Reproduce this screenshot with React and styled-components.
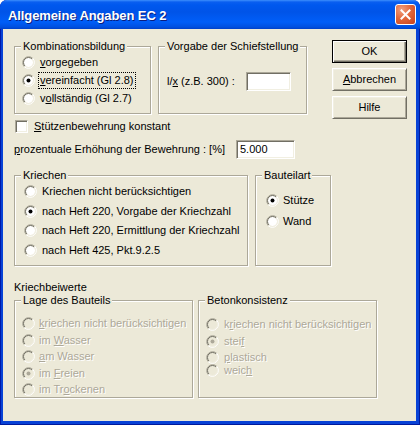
import React from "react";
import styled, { createGlobalStyle } from "styled-components";

const GlobalStyle = createGlobalStyle`
  html, body {
    margin: 0;
    padding: 0;
    background: #ffffff;
  }
  body {
    font-family: "Liberation Sans", Arial, sans-serif;
    font-size: 11px;
    color: #000;
  }
`;

const Window = styled.div`
  width: 420px;
  height: 425px;
  display: flex;
  flex-direction: column;
  background: #0842d6;
  border-radius: 7px 7px 0 0;
  overflow: hidden;
  box-shadow: inset 1px 0 0 #0019a8, inset -1px -1px 0 #001a9c;
`;

const TitleBar = styled.div`
  height: 29px;
  flex: none;
  display: flex;
  align-items: center;
  padding: 0 4px 0 8px;
  box-sizing: border-box;
  background: linear-gradient(
    to bottom,
    #3d8ffc 0px,
    #0a5ff0 2px,
    #0058ee 5px,
    #0054e8 12px,
    #005ef8 22px,
    #0050e0 27px,
    #0040c8 29px
  );
`;

const Title = styled.span`
  flex: 1;
  color: #fff;
  font-family: "Liberation Sans", Arial, sans-serif;
  font-weight: bold;
  font-size: 13px;
  letter-spacing: -0.1px;
  text-shadow: 1px 1px 0 #0a1e80;
  padding-top: 1px;
`;

const CloseButton = styled.div`
  width: 21px;
  height: 21px;
  box-sizing: border-box;
  border: 1px solid #fff;
  border-radius: 3px;
  background: radial-gradient(circle at 30% 25%, #f0a080 0%, #e2683c 45%, #c9401a 100%);
  display: flex;
  align-items: center;
  justify-content: center;
`;

const Client = styled.div`
  flex: 1;
  margin: 0 4px 4px 3px;
  background: #ece9d8;
  padding: 11px 9px 0 11px;
  display: flex;
  flex-direction: column;
`;

const TopRow = styled.div`
  display: flex;
  align-items: flex-start;
  height: 78px;
`;

const GroupRow = styled.div`
  display: flex;
  gap: ${(p) => p.$gap}px;
  margin-top: ${(p) => p.$mt || 0}px;
`;

const Group = styled.fieldset`
  box-sizing: border-box;
  margin: 0;
  padding: 0;
  min-width: 0;
  width: ${(p) => p.$w}px;
  height: ${(p) => p.$h}px;
  border: 1px solid #aca899;
  box-shadow: inset 1px 1px 0 #fff, 1px 1px 0 #fff;
`;

const Legend = styled.legend`
  margin-left: 6px;
  padding: 0 2px 0 2px;
  line-height: 13px;
  height: 13px;
  background: #ece9d8;
  color: #000;
`;

const GroupBody = styled.div`
  padding: ${(p) => p.$pt || 0}px 0 0 ${(p) => p.$pl}px;
`;

const RadioRow = styled.div`
  display: flex;
  align-items: center;
  height: ${(p) => p.$h}px;
  gap: ${(p) => p.$gap}px;
`;

const RadioSvg = styled.svg`
  flex: none;
  display: block;
`;

const Text = styled.span`
  display: inline-block;
  line-height: 13px;
  white-space: nowrap;
  color: ${(p) => (p.$disabled ? "#aca899" : "#000")};
  text-shadow: ${(p) => (p.$disabled ? "1px 1px 0 #fff" : "none")};
  outline: ${(p) => (p.$focus ? "1px dotted #000" : "none")};
  outline-offset: 1px;

  u {
    text-decoration-thickness: 1px;
    text-underline-offset: 1px;
  }
`;

const FieldRow = styled.div`
  display: flex;
  align-items: center;
  margin-top: ${(p) => p.$mt}px;
  height: ${(p) => p.$h}px;
`;

const FieldLabel = styled.span`
  width: ${(p) => p.$w}px;
  flex: none;
  white-space: nowrap;
  line-height: 13px;
`;

const TextBox = styled.div`
  box-sizing: border-box;
  width: ${(p) => p.$w}px;
  height: 19px;
  background: #fff;
  border-style: solid;
  border-width: 1px;
  border-color: #aca899 #fff #fff #aca899;
  box-shadow: inset 1px 1px 0 #716f64, inset -1px -1px 0 #f1efe2;
  padding: 2px 0 0 3px;
  line-height: 13px;
  font-size: 11px;
`;

const CheckRow = styled.div`
  display: flex;
  align-items: center;
  gap: 6px;
  margin-top: 2px;
  margin-left: 1px;
  height: 13px;
`;

const CheckBox = styled.div`
  box-sizing: border-box;
  width: 13px;
  height: 13px;
  flex: none;
  background: #fff;
  border-style: solid;
  border-width: 1px;
  border-color: #aca899 #fff #fff #aca899;
  box-shadow: inset 1px 1px 0 #716f64, inset -1px -1px 0 #f1efe2;
`;

const ButtonCol = styled.div`
  display: flex;
  flex-direction: column;
  gap: 5px;
  margin-left: 25px;
`;

const Button = styled.div`
  box-sizing: border-box;
  width: 75px;
  height: 23px;
  display: flex;
  align-items: center;
  justify-content: center;
  background: #ece9d8;
  border-style: solid;
  border-width: 1px;
  border-color: ${(p) =>
    p.$default ? "#000" : "#fff #716f64 #716f64 #fff"};
  box-shadow: ${(p) =>
    p.$default
      ? "inset 1px 1px 0 #fff, inset -1px -1px 0 #716f64, inset -2px -2px 0 #aca899"
      : "inset 1px 1px 0 #f1efe2, inset -1px -1px 0 #aca899"};
  line-height: 13px;
`;

const Caption = styled.div`
  margin-top: 15px;
  line-height: 13px;
  height: 13px;
`;

const Radio = ({ checked, disabled }) => (
  <RadioSvg width="13" height="13" viewBox="0 0 13 13">
    <circle cx="6.5" cy="6.5" r="4.6" fill={disabled ? "#ece9d8" : "#fff"} />
    <path d="M2.26 10.74A6 6 0 0 1 10.74 2.26" stroke="#aca899" fill="none" />
    <path d="M10.74 2.26A6 6 0 0 1 2.26 10.74" stroke="#ffffff" fill="none" />
    <path d="M2.96 10.04A5 5 0 0 1 10.04 2.96" stroke="#716f64" fill="none" />
    <path d="M10.04 2.96A5 5 0 0 1 2.96 10.04" stroke="#f1efe2" fill="none" />
    {checked && (
      <circle cx="6.5" cy="6.5" r="2" fill={disabled ? "#aca899" : "#000"} />
    )}
  </RadioSvg>
);

const RadioOption = ({ h, gap, checked, disabled, focus, children }) => (
  <RadioRow $h={h} $gap={gap}>
    <Radio checked={checked} disabled={disabled} />
    <Text $disabled={disabled} $focus={focus}>
      {children}
    </Text>
  </RadioRow>
);

const lageRows = [
  [<><u>k</u>riechen nicht berücksichtigen</>, false],
  [<>im <u>W</u>asser</>, false],
  [<><u>a</u>m Wasser</>, false],
  [<>im <u>F</u>reien</>, true],
  [<>im Tr<u>o</u>ckenen</>, false],
];

const betonRows = [
  [<>k<u>r</u>iechen nicht berücksichtigen</>, false, 18],
  [<>stei<u>f</u></>, true, 17],
  [<><u>p</u>lastisch</>, false, 14],
  [<>weic<u>h</u></>, false, 13],
];

const kriechRows = [
  ["Kriechen nicht berücksichtigen", false],
  ["nach Heft 220, Vorgabe der Kriechzahl", true],
  ["nach Heft 220, Ermittlung der Kriechzahl", false],
  ["nach Heft 425, Pkt.9.2.5", false],
];

export default function App() {
  return (
    <>
      <GlobalStyle />
      <Window>
        <TitleBar>
          <Title>Allgemeine Angaben EC 2</Title>
          <CloseButton>
            <svg width="11" height="11" viewBox="0 0 11 11">
              <path d="M1.5 1.5L9.5 9.5M9.5 1.5L1.5 9.5" stroke="#fff" strokeWidth="2" strokeLinecap="square" />
            </svg>
          </CloseButton>
        </TitleBar>
        <Client>
          <TopRow>
            <GroupRow $gap={7}>
              <Group $w={137} $h={74}>
                <Legend>Kombinationsbildung</Legend>
                <GroupBody $pl={7}>
                  <RadioOption h={18} gap={5}>
                    <u>v</u>orgegeben
                  </RadioOption>
                  <RadioOption h={18} gap={5} checked focus>
                    <u>v</u>ereinfacht (Gl 2.8)
                  </RadioOption>
                  <RadioOption h={18} gap={5}>
                    v<u>o</u>llständig (Gl 2.7)
                  </RadioOption>
                </GroupBody>
              </Group>
              <Group $w={149} $h={74}>
                <Legend>Vorgabe der Schiefstellung</Legend>
                <GroupBody $pl={8}>
                  <FieldRow $mt={18} $h={20}>
                    <FieldLabel $w={79}>
                      l/<u>x</u> (z.B. 300) :
                    </FieldLabel>
                    <TextBox $w={45} />
                  </FieldRow>
                </GroupBody>
              </Group>
            </GroupRow>
            <ButtonCol>
              <Button $default>OK</Button>
              <Button>
                <span>
                  <u>A</u>bbrechen
                </span>
              </Button>
              <Button>Hilfe</Button>
            </ButtonCol>
          </TopRow>

          <CheckRow>
            <CheckBox />
            <Text>
              <u>S</u>tützenbewehrung konstant
            </Text>
          </CheckRow>

          <FieldRow $mt={7} $h={19}>
            <FieldLabel $w={222}>
              <u>p</u>rozentuale Erhöhung der Bewehrung : [%]
            </FieldLabel>
            <TextBox $w={59}>5.000</TextBox>
          </FieldRow>

          <GroupRow $gap={7} $mt={10}>
            <Group $w={234} $h={97}>
              <Legend>Kriechen</Legend>
              <GroupBody $pl={9}>
                {kriechRows.map(([label, checked]) => (
                  <RadioOption key={label} h={19.5} gap={5} checked={checked}>
                    {label}
                  </RadioOption>
                ))}
              </GroupBody>
            </Group>
            <Group $w={76} $h={97}>
              <Legend>Bauteilart</Legend>
              <GroupBody $pl={10} $pt={8}>
                <RadioOption h={21} gap={4} checked>
                  Stütze
                </RadioOption>
                <RadioOption h={21} gap={4}>
                  Wand
                </RadioOption>
              </GroupBody>
            </Group>
          </GroupRow>

          <Caption>Kriechbeiwerte</Caption>

          <GroupRow $gap={5}>
            <Group $w={179} $h={104}>
              <Legend>Lage des Bauteils</Legend>
              <GroupBody $pl={7} $pt={8.5}>
                {lageRows.map(([label, checked], i) => (
                  <RadioOption key={i} h={16.5} gap={4} checked={checked} disabled>
                    {label}
                  </RadioOption>
                ))}
              </GroupBody>
            </Group>
            <Group $w={179} $h={104}>
              <Legend>Betonkonsistenz</Legend>
              <GroupBody $pl={7} $pt={8}>
                {betonRows.map(([label, checked, h], i) => (
                  <RadioOption key={i} h={h} gap={5} checked={checked} disabled>
                    {label}
                  </RadioOption>
                ))}
              </GroupBody>
            </Group>
          </GroupRow>
        </Client>
      </Window>
    </>
  );
}
